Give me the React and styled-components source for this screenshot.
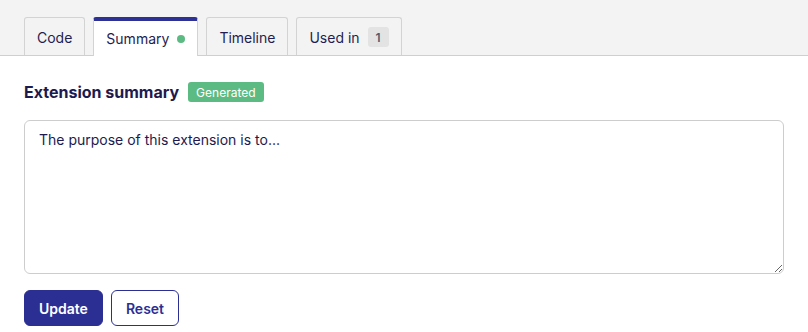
import React from "react";
import styled, { createGlobalStyle } from "styled-components";

const Global = createGlobalStyle`
  html, body { margin: 0; padding: 0; background: #fff; }
  body { font-family: Inter, "Noto Sans", sans-serif; color: #1c1a4f; }
  * { box-sizing: border-box; }
`;

const TabBar = styled.div`
  display: flex;
  align-items: flex-end;
  gap: 8px;
  height: 56px;
  padding: 0 24px;
  background: #f3f3f3;
  border-bottom: 1px solid #cfcfcf;
`;

const Tab = styled.div`
  display: flex;
  align-items: center;
  gap: 8px;
  height: ${(p) => (p.$active ? "39px" : "38px")};
  margin-bottom: ${(p) => (p.$active ? "-1px" : "0")};
  padding: 0 12px;
  padding-top: ${(p) => (p.$active ? "0" : "1px")};
  font-size: 14px;
  color: #1f1d52;
  background: ${(p) => (p.$active ? "#fff" : "#f3f3f3")};
  border: 1px solid #d3d3d3;
  border-top: ${(p) => (p.$active ? "4px solid #2d3196" : "1px solid #d3d3d3")};
  border-bottom: none;
  border-radius: 3px 3px 0 0;
`;

const Dot = styled.span`
  width: 8px;
  height: 8px;
  border-radius: 50%;
  background: #5cbb82;
`;

const Count = styled.span`
  display: inline-flex;
  align-items: center;
  justify-content: center;
  min-width: 21px;
  height: 20px;
  padding: 0 6px;
  border-radius: 3px;
  background: #e3e3e3;
  color: #555a6d;
  font-size: 12px;
  font-weight: 600;
`;

const Body = styled.div`
  padding: 26px 24px 0 24px;
`;

const HeadingRow = styled.div`
  display: flex;
  align-items: center;
  gap: 9px;
  height: 20px;
`;

const Heading = styled.h2`
  margin: 0;
  font-size: 16px;
  font-weight: 700;
  color: #1c1a4f;
`;

const Badge = styled.span`
  display: inline-flex;
  align-items: center;
  height: 20px;
  padding: 0 8px;
  border-radius: 3px;
  background: #5cbb82;
  color: #fff;
  font-size: 12px;
`;

const TextArea = styled.textarea`
  display: block;
  width: 760px;
  height: 154px;
  margin-top: 18px;
  padding: 9px 14px;
  border: 1px solid #cdcdcd;
  border-radius: 6px;
  font-family: Inter, "Noto Sans", sans-serif;
  font-size: 14px;
  line-height: 20px;
  color: #1c1a4f;
  resize: both;
  outline: none;
`;

const Actions = styled.div`
  display: flex;
  gap: 8px;
  margin-top: 16px;
`;

const Button = styled.button`
  height: 36px;
  padding: 0 14px;
  border-radius: 6px;
  font-family: Inter, "Noto Sans", sans-serif;
  font-size: 14px;
  font-weight: 600;
  cursor: pointer;
  border: 1px solid #2b2f94;
  background: ${(p) => (p.$primary ? "#2b2f94" : "#fff")};
  color: ${(p) => (p.$primary ? "#fff" : "#2b2f94")};
`;

export default function App() {
  return (
    <>
      <Global />
      <TabBar>
        <Tab>Code</Tab>
        <Tab $active>
          Summary <Dot />
        </Tab>
        <Tab>Timeline</Tab>
        <Tab>
          Used in <Count>1</Count>
        </Tab>
      </TabBar>
      <Body>
        <HeadingRow>
          <Heading>Extension summary</Heading>
          <Badge>Generated</Badge>
        </HeadingRow>
        <TextArea defaultValue="The purpose of this extension is to..." />
        <Actions>
          <Button $primary>Update</Button>
          <Button>Reset</Button>
        </Actions>
      </Body>
    </>
  );
}
